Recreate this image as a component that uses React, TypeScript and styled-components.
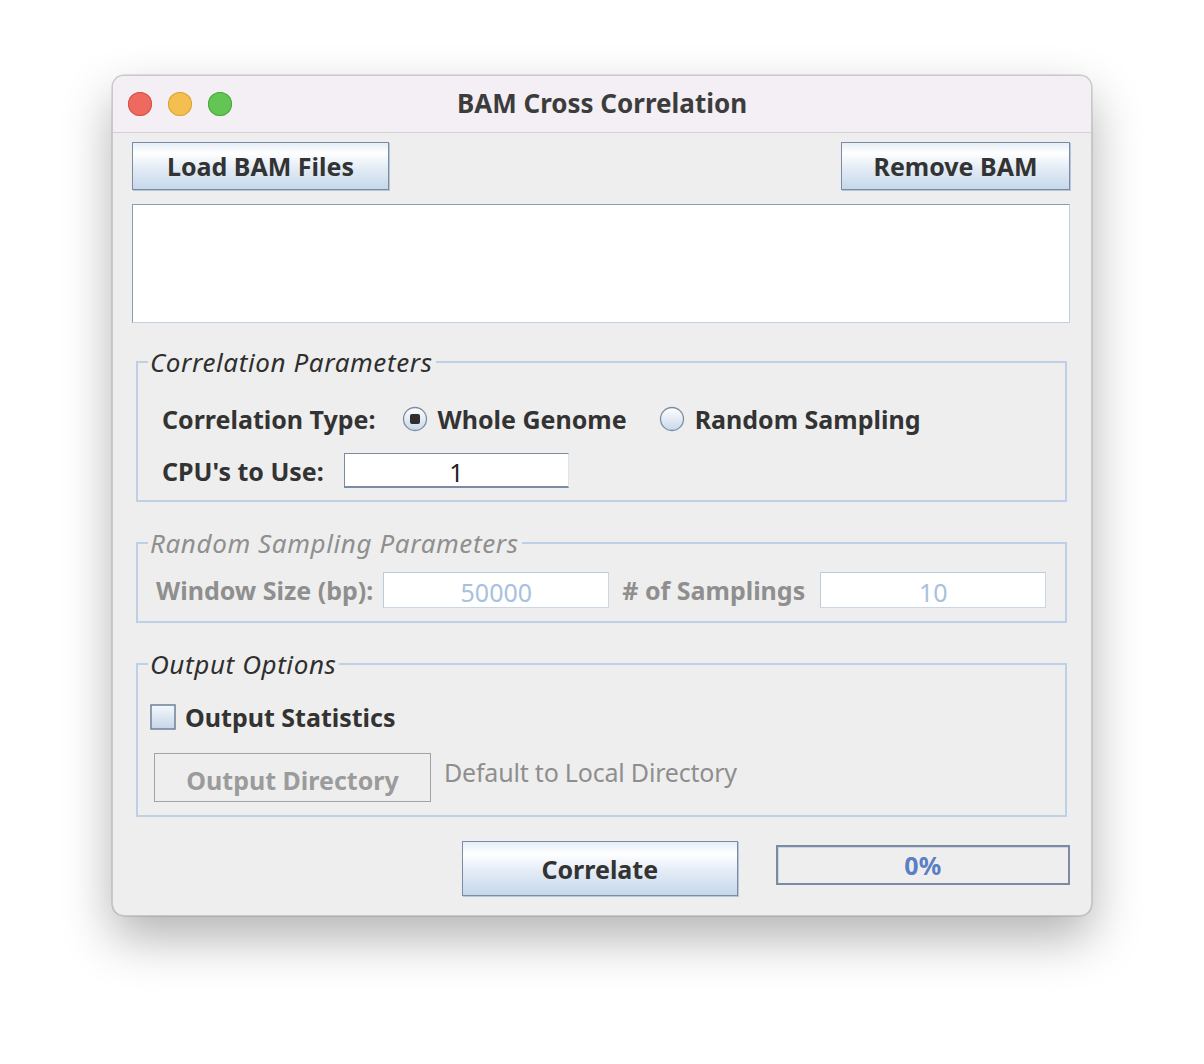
import styled, { createGlobalStyle } from 'styled-components';

const GlobalStyle = createGlobalStyle`
  html, body {
    margin: 0;
    padding: 0;
    background: #ffffff;
  }
  body {
    font-family: 'Noto Sans', 'DejaVu Sans', sans-serif;
    color: #333333;
  }
`;

const Page = styled.div`
  display: flex;
  justify-content: center;
  padding-top: 75px;
  height: 1064px;
  box-sizing: border-box;
`;

const Window = styled.div`
  width: 980px;
  height: 841px;
  box-sizing: border-box;
  border-radius: 12px;
  border: 1px solid #c9c9c9;
  background: #eeeeee;
  box-shadow: 0 22px 50px rgba(0, 0, 0, 0.3), 0 0 0 0.5px rgba(0, 0, 0, 0.2);
  overflow: hidden;
  display: flex;
  flex-direction: column;
`;

const TitleBar = styled.div`
  height: 56px;
  flex: none;
  background: #f3eff5;
  border-bottom: 1px solid #d3d0d4;
  display: flex;
  align-items: center;
  position: relative;
`;

const Lights = styled.div`
  display: flex;
  gap: 16px;
  padding-left: 15px;
`;

const Light = styled.span<{ $fill: string; $edge: string }>`
  width: 24px;
  height: 24px;
  border-radius: 50%;
  background: ${(p) => p.$fill};
  box-shadow: inset 0 0 0 1px ${(p) => p.$edge};
`;

const Title = styled.div`
  position: absolute;
  left: 0;
  right: 0;
  top: 10px;
  text-align: center;
  font-size: 26px;
  line-height: 34px;
  font-weight: 700;
  color: #3c3c3c;
  pointer-events: none;
`;

const Body = styled.div`
  flex: 1;
  padding: 9px 21px 0 19px;
  display: flex;
  flex-direction: column;
`;

const TopBar = styled.div`
  display: flex;
  justify-content: space-between;
`;

const Button = styled.button<{ $w: number; $h?: number }>`
  width: ${(p) => p.$w}px;
  height: ${(p) => p.$h ?? 48}px;
  box-sizing: border-box;
  border: 1px solid #7b8ca2;
  box-shadow: 1px 1px 0 #b4c6da;
  background: linear-gradient(#e6eef7 0%, #ffffff 22%, #e3ecf6 55%, #c6d8ea 100%);
  font-family: 'Noto Sans', 'DejaVu Sans', sans-serif;
  font-size: 25px;
  font-weight: 700;
  color: #333333;
  padding: 0;
  cursor: default;
`;

const DisabledButton = styled.button`
  width: 277px;
  height: 49px;
  box-sizing: border-box;
  border: 1px solid #a3a3a3;
  background: #eeeeee;
  font-family: 'Noto Sans', 'DejaVu Sans', sans-serif;
  font-size: 25px;
  font-weight: 700;
  color: #9b9b9b;
  padding: 4px 0 0;
`;

const FileList = styled.div`
  margin-top: 14px;
  height: 119px;
  box-sizing: border-box;
  background: #ffffff;
  border: 1px solid #8a9bb0;
  border-right-color: #c4cfdc;
  border-bottom-color: #c4cfdc;
`;

const Group = styled.fieldset<{ $top: number; $h: number }>`
  margin: ${(p) => p.$top}px 3px 0 4px;
  height: ${(p) => p.$h}px;
  box-sizing: border-box;
  border: 2px solid #bdd0e6;
  padding: 0;
  min-width: 0;
`;

const Legend = styled.legend<{ $off?: boolean }>`
  margin-left: 10px;
  padding: 0 3px 0 2px;
  font-size: 26px;
  letter-spacing: 0.6px;
  font-style: italic;
  color: ${(p) => (p.$off ? '#8f8f8f' : '#2f2f2f')};
  line-height: 30px;
`;

const Row = styled.div<{ $gap: number; $pad: number; $mt: number }>`
  display: flex;
  align-items: center;
  gap: ${(p) => p.$gap}px;
  padding-left: ${(p) => p.$pad}px;
  margin-top: ${(p) => p.$mt}px;
`;

const Label = styled.span<{ $off?: boolean; $ml?: number }>`
  font-size: 25px;
  font-weight: 700;
  color: ${(p) => (p.$off ? '#8f8f8f' : '#333333')};
  white-space: nowrap;
  margin-left: ${(p) => p.$ml ?? 0}px;
`;

const Note = styled.span`
  font-size: 25px;
  letter-spacing: -0.2px;
  color: #8e8e8e;
  margin-top: -12px;
`;

const Choice = styled.label<{ $ml?: number }>`
  display: flex;
  align-items: center;
  gap: 10px;
  margin-left: ${(p) => p.$ml ?? 0}px;
`;

const Field = styled.div<{ $w: number; $h: number; $off?: boolean; $ml?: number }>`
  width: ${(p) => p.$w}px;
  height: ${(p) => p.$h}px;
  margin-left: ${(p) => p.$ml ?? 0}px;
  box-sizing: border-box;
  background: #ffffff;
  border: 1px solid ${(p) => (p.$off ? '#b9cbe0' : '#7b8ca2')};
  border-right-color: ${(p) => (p.$off ? '#c8d6e6' : '#dde4ec')};
  border-bottom-color: ${(p) => (p.$off ? '#c8d6e6' : '#7b8ca2')};
  border-bottom-width: ${(p) => (p.$off ? 1 : 2)}px;
  display: flex;
  align-items: center;
  justify-content: center;
  padding-top: 3px;
  font-size: 25px;
  color: ${(p) => (p.$off ? '#a9c1dd' : '#222222')};
`;

const Footer = styled.div`
  display: flex;
  align-items: center;
  margin-top: 24px;
  padding-left: 330px;
  gap: 38px;
`;

const Progress = styled.div`
  width: 296px;
  height: 40px;
  box-sizing: border-box;
  border: 2px solid #7b8ca2;
  box-shadow: inset 1px 1px 0 #c8d6e6;
  background: #eeeeee;
  display: flex;
  align-items: center;
  justify-content: center;
  font-size: 25px;
  font-weight: 700;
  color: #5b7fc3;
  margin-top: -8px;
`;

function Radio({ on }: { on?: boolean }) {
  return (
    <svg width="26" height="26" viewBox="0 0 26 26">
      <defs>
        <linearGradient id={on ? 'rg-on' : 'rg-off'} x1="0" y1="0" x2="0" y2="1">
          <stop offset="0" stopColor="#ffffff" />
          <stop offset="1" stopColor="#c7d7e8" />
        </linearGradient>
      </defs>
      <circle cx="13" cy="13" r="11.5" fill={`url(#${on ? 'rg-on' : 'rg-off'})`} stroke="#7d8da2" strokeWidth="1.3" />
      {on && <rect x="8" y="8" width="10" height="10" rx="2" fill="#2e2e2e" />}
    </svg>
  );
}

function Check() {
  return (
    <svg width="26" height="26" viewBox="0 0 26 26">
      <defs>
        <linearGradient id="cb" x1="0" y1="0" x2="0" y2="1">
          <stop offset="0" stopColor="#f4f8fc" />
          <stop offset="1" stopColor="#c5d6e8" />
        </linearGradient>
      </defs>
      <rect x="1" y="1" width="24" height="24" fill="url(#cb)" stroke="#6f8096" strokeWidth="1.5" />
    </svg>
  );
}

export default function App() {
  return (
    <>
      <GlobalStyle />
      <Page>
        <Window>
          <TitleBar>
            <Lights>
              <Light $fill="#ee6a5f" $edge="#d25247" />
              <Light $fill="#f5bf4f" $edge="#d9a33a" />
              <Light $fill="#62c554" $edge="#4aa83d" />
            </Lights>
            <Title>BAM Cross Correlation</Title>
          </TitleBar>
          <Body>
            <TopBar>
              <Button $w={257}>Load BAM Files</Button>
              <Button $w={229}>Remove BAM</Button>
            </TopBar>
            <FileList />

            <Group $top={24} $h={155}>
              <Legend>Correlation Parameters</Legend>
              <Row $gap={26} $pad={24} $mt={25}>
                <Label>Correlation Type:</Label>
                <Choice>
                  <Radio on />
                  <Label>Whole Genome</Label>
                </Choice>
                <Choice $ml={6}>
                  <Radio />
                  <Label>Random Sampling</Label>
                </Choice>
              </Row>
              <Row $gap={20} $pad={24} $mt={17}>
                <Label>CPU's to Use:</Label>
                <Field $w={225} $h={35}>1</Field>
              </Row>
            </Group>

            <Group $top={26} $h={95}>
              <Legend $off>Random Sampling Parameters</Legend>
              <Row $gap={10} $pad={18} $mt={14}>
                <Label $off>Window Size (bp):</Label>
                <Field $w={226} $h={36} $off>50000</Field>
                <Label $off $ml={3}>
                  # of Samplings
                </Label>
                <Field $w={226} $h={36} $off $ml={5}>10</Field>
              </Row>
            </Group>

            <Group $top={26} $h={168}>
              <Legend>Output Options</Legend>
              <Row $gap={9} $pad={12} $mt={21}>
                <Check />
                <Label>Output Statistics</Label>
              </Row>
              <Row $gap={13} $pad={16} $mt={19}>
                <DisabledButton>Output Directory</DisabledButton>
                <Note>Default to Local Directory</Note>
              </Row>
            </Group>

            <Footer>
              <Button $w={277} $h={55}>Correlate</Button>
              <Progress>0%</Progress>
            </Footer>
          </Body>
        </Window>
      </Page>
    </>
  );
}
